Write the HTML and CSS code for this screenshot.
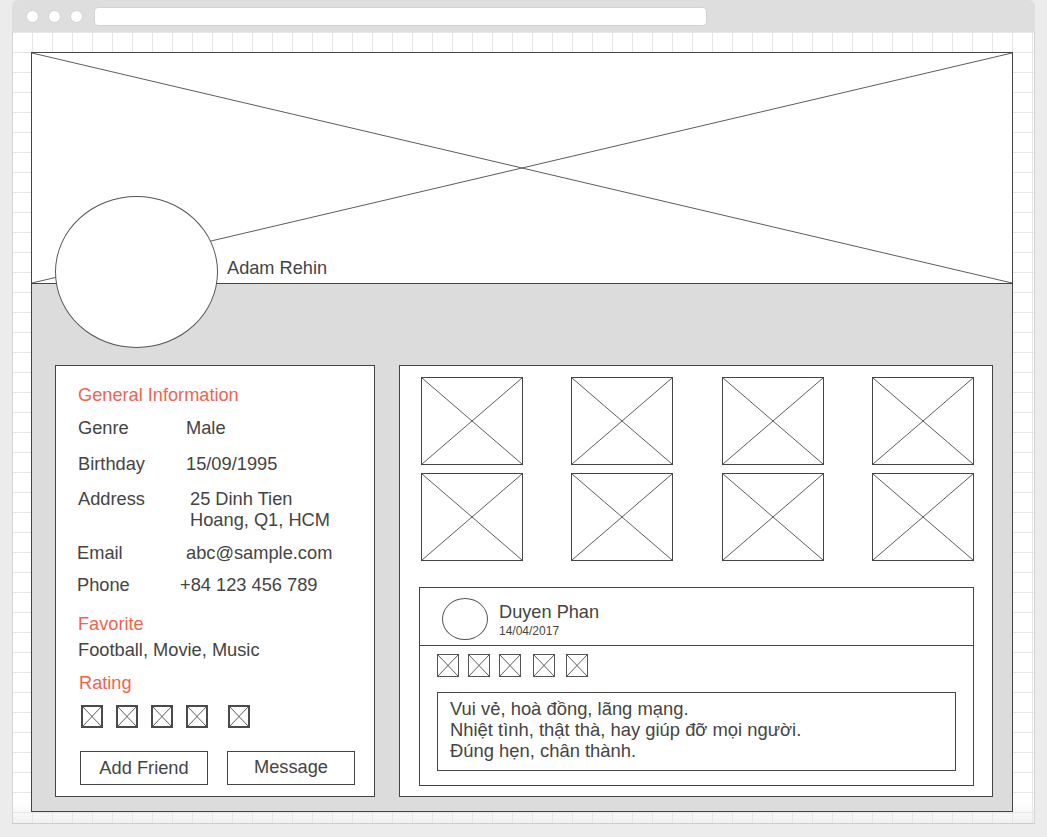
FILE: index.html
```html
<!DOCTYPE html>
<html lang="vi">
<head>
<meta charset="utf-8">
<title>Profile wireframe</title>
<link rel="stylesheet" href="styles.css">
</head>
<body>
<div class="window">
  <div class="titlebar">
    <span class="dot"></span><span class="dot"></span><span class="dot"></span>
    <div class="urlbar"></div>
  </div>
  <div class="canvas">
    <div class="frame">
      <div class="banner">
        <svg class="cross" viewBox="0 0 100 100" preserveAspectRatio="none"><path d="M0 0L100 100M100 0L0 100"/></svg>
        <div class="name">Adam Rehin</div>
      </div>
      <div class="avatar"></div>
      <div class="body">
        <section class="card info">
          <h2 class="heading">General Information</h2>
          <div class="row row-genre"><span class="label">Genre</span><span class="value">Male</span></div>
          <div class="row row-birthday"><span class="label">Birthday</span><span class="value">15/09/1995</span></div>
          <div class="row row-address"><span class="label">Address</span><span class="value value-address">25 Dinh Tien<br>Hoang, Q1, HCM</span></div>
          <div class="row row-email"><span class="label label-shift">Email</span><span class="value">abc@sample.com</span></div>
          <div class="row row-phone"><span class="label label-shift">Phone</span><span class="value value-phone">+84 123 456 789</span></div>
          <h2 class="heading heading-fav">Favorite</h2>
          <p class="plain">Football, Movie, Music</p>
          <h2 class="heading heading-rating">Rating</h2>
          <div class="stars">
            <svg class="mini" viewBox="0 0 100 100" preserveAspectRatio="none"><path d="M0 0L100 100M100 0L0 100"/></svg>
            <svg class="mini" viewBox="0 0 100 100" preserveAspectRatio="none"><path d="M0 0L100 100M100 0L0 100"/></svg>
            <svg class="mini" viewBox="0 0 100 100" preserveAspectRatio="none"><path d="M0 0L100 100M100 0L0 100"/></svg>
            <svg class="mini" viewBox="0 0 100 100" preserveAspectRatio="none"><path d="M0 0L100 100M100 0L0 100"/></svg>
            <svg class="mini mini-last" viewBox="0 0 100 100" preserveAspectRatio="none"><path d="M0 0L100 100M100 0L0 100"/></svg>
          </div>
          <div class="actions">
            <button class="btn">Add Friend</button>
            <button class="btn btn-msg">Message</button>
          </div>
        </section>
        <section class="card gallery-card">
          <div class="gallery">
            <svg class="ph" viewBox="0 0 100 100" preserveAspectRatio="none"><path d="M0 0L100 100M100 0L0 100"/></svg>
            <svg class="ph" viewBox="0 0 100 100" preserveAspectRatio="none"><path d="M0 0L100 100M100 0L0 100"/></svg>
            <svg class="ph" viewBox="0 0 100 100" preserveAspectRatio="none"><path d="M0 0L100 100M100 0L0 100"/></svg>
            <svg class="ph" viewBox="0 0 100 100" preserveAspectRatio="none"><path d="M0 0L100 100M100 0L0 100"/></svg>
            <svg class="ph" viewBox="0 0 100 100" preserveAspectRatio="none"><path d="M0 0L100 100M100 0L0 100"/></svg>
            <svg class="ph" viewBox="0 0 100 100" preserveAspectRatio="none"><path d="M0 0L100 100M100 0L0 100"/></svg>
            <svg class="ph" viewBox="0 0 100 100" preserveAspectRatio="none"><path d="M0 0L100 100M100 0L0 100"/></svg>
            <svg class="ph" viewBox="0 0 100 100" preserveAspectRatio="none"><path d="M0 0L100 100M100 0L0 100"/></svg>
          </div>
          <div class="comment">
            <div class="comment-head">
              <div class="c-avatar"></div>
              <div class="c-meta">
                <div class="c-name">Duyen Phan</div>
                <div class="c-date">14/04/2017</div>
              </div>
            </div>
            <div class="comment-body">
              <div class="c-stars">
                <svg class="mini mini-c" viewBox="0 0 100 100" preserveAspectRatio="none"><path d="M0 0L100 100M100 0L0 100"/></svg>
                <svg class="mini mini-c" viewBox="0 0 100 100" preserveAspectRatio="none"><path d="M0 0L100 100M100 0L0 100"/></svg>
                <svg class="mini mini-c" viewBox="0 0 100 100" preserveAspectRatio="none"><path d="M0 0L100 100M100 0L0 100"/></svg>
                <svg class="mini mini-c mini-wide" viewBox="0 0 100 100" preserveAspectRatio="none"><path d="M0 0L100 100M100 0L0 100"/></svg>
                <svg class="mini mini-c mini-wide2" viewBox="0 0 100 100" preserveAspectRatio="none"><path d="M0 0L100 100M100 0L0 100"/></svg>
              </div>
              <div class="c-text">Vui vẻ, hoà đồng, lãng mạng.<br>Nhiệt tình, thật thà, hay giúp đỡ mọi người.<br>Đúng hẹn, chân thành.</div>
            </div>
          </div>
        </section>
      </div>
    </div>
  </div>
</div>
</body>
</html>
```
FILE: styles.css
```css
* { box-sizing: border-box; }

html, body { height: 100%; }

body {
  margin: 0;
  background: #ececec;
  font-family: "Liberation Sans", Arial, sans-serif;
  color: #444;
}

.window {
  margin-left: 12px;
  width: 1023px;
  border-bottom: 1px solid #cdcdcd;
}

.titlebar {
  height: 32px;
  background: #dedede;
  border-radius: 6px 6px 0 0;
  display: flex;
  align-items: center;
  padding-left: 14px;
  gap: 9px;
}

.dot {
  width: 13px;
  height: 13px;
  border-radius: 50%;
  background: #fff;
  border: 1px solid #d2d2d2;
}

.urlbar {
  margin-left: 2px;
  width: 613px;
  height: 19px;
  background: #fff;
  border: 1px solid #d2d2d2;
  border-radius: 4px;
}

.canvas {
  height: 791px;
  border-left: 1px solid #d4d4d4;
  border-right: 1px solid #d4d4d4;
  background-color: #fff;
  background-image:
    linear-gradient(to right, #e6e6e6 1px, transparent 1px),
    linear-gradient(to bottom, #e6e6e6 1px, transparent 1px),
    linear-gradient(to bottom, rgba(255,255,255,0) 770px, #f1f1f1 791px);
  background-size: 20px 20px, 20px 20px, 100% 100%;
  background-origin: border-box;
  padding: 20px 0 0 18px;
}

.frame {
  position: relative;
  width: 982px;
  height: 760px;
  border: 1px solid #454545;
  display: flex;
  flex-direction: column;
}

.banner {
  height: 231px;
  flex: none;
  background: #fff;
  border-bottom: 1px solid #454545;
  display: grid;
}

.cross {
  grid-area: 1 / 1;
  width: 100%;
  height: 100%;
  display: block;
}

.cross path, .ph path, .mini path {
  stroke: #5c5c5c;
  stroke-width: 1;
  fill: none;
  vector-effect: non-scaling-stroke;
}

.name {
  grid-area: 1 / 1;
  align-self: end;
  justify-self: start;
  padding: 0 0 4px 195px;
  font-size: 18.2px;
  line-height: 21px;
  color: #444;
}

.avatar {
  position: absolute;
  left: 23px;
  top: 143px;
  width: 163px;
  height: 152px;
  border-radius: 50%;
  background: #fff;
  border: 1px solid #555;
}

.body {
  flex: 1;
  background: #dcdcdc;
  display: flex;
  gap: 24px;
  padding: 81px 19px 14px 23px;
}

.card {
  background: #fff;
  border: 1px solid #454545;
  height: 432px;
  flex: none;
}

.info {
  width: 320px;
  padding: 19px 18px 10px 22px;
}

.heading {
  margin: 0;
  font-size: 18.2px;
  line-height: 21px;
  font-weight: normal;
  color: #f8614d;
}

.row {
  display: grid;
  grid-template-columns: 108px 1fr;
  font-size: 18.25px;
  line-height: 21px;
}

.row-genre { margin-top: 11px; }
.row-birthday { margin-top: 15px; }
.row-address { margin-top: 14px; }
.row-email { margin-top: 12px; }
.row-phone { margin-top: 11px; }

.label-shift { margin-left: -1px; }
.value-address { padding-left: 4px; }
.value-phone { margin-left: -6px; }

.heading-fav { margin-top: 19px; }

.plain {
  margin: 4px 0 0;
  font-size: 18.25px;
  line-height: 21px;
}

.heading-rating { margin-top: 13px; padding-left: 1px; }

.stars {
  display: flex;
  gap: 13px;
  margin-top: 11px;
  padding-left: 3px;
}

.mini {
  display: block;
  width: 22px;
  height: 23px;
  border: 2px solid #4a4a4a;
  background: #fff;
}

.mini-last { margin-left: 7px; }

.actions {
  display: flex;
  gap: 19px;
  margin-top: 23px;
  padding-left: 2px;
}

.btn {
  width: 128px;
  height: 34px;
  border: 1px solid #454545;
  background: #fff;
  font-family: "Liberation Sans", Arial, sans-serif;
  font-size: 18.25px;
  color: #444;
  padding: 0;
  display: flex;
  align-items: center;
  justify-content: center;
}

.btn-msg { padding-bottom: 2px; }

.gallery-card {
  width: 594px;
  padding: 11px 18px 10px 19px;
}

.gallery {
  display: grid;
  grid-template-columns: repeat(4, 102px);
  justify-content: space-between;
  row-gap: 8px;
  margin-left: 2px;
}

.ph {
  display: block;
  width: 102px;
  height: 88px;
  border: 1px solid #454545;
}

.comment {
  margin-top: 26px;
  border: 1px solid #454545;
}

.comment-head {
  height: 58px;
  border-bottom: 1px solid #454545;
  display: flex;
  align-items: flex-start;
  padding: 10px 0 0 22px;
  gap: 11px;
}

.c-avatar {
  width: 46px;
  height: 42px;
  border-radius: 50%;
  border: 1px solid #555;
  flex: none;
}

.c-meta { padding-top: 4px; }

.c-name {
  font-size: 18.2px;
  line-height: 20px;
}

.c-date {
  margin-top: 2px;
  font-size: 12px;
  line-height: 14px;
}

.comment-body {
  padding: 8px 17px 14px 17px;
}

.c-stars {
  display: flex;
  gap: 9px;
}

.mini-c {
  border-width: 1px;
  border-color: #555;
}

.mini-wide { margin-left: 3px; }
.mini-wide2 { margin-left: 2px; }

.c-text {
  margin-top: 15px;
  height: 79px;
  border: 1px solid #454545;
  padding: 5px 12px 0 12px;
  font-size: 18.4px;
  line-height: 21px;
}
```
